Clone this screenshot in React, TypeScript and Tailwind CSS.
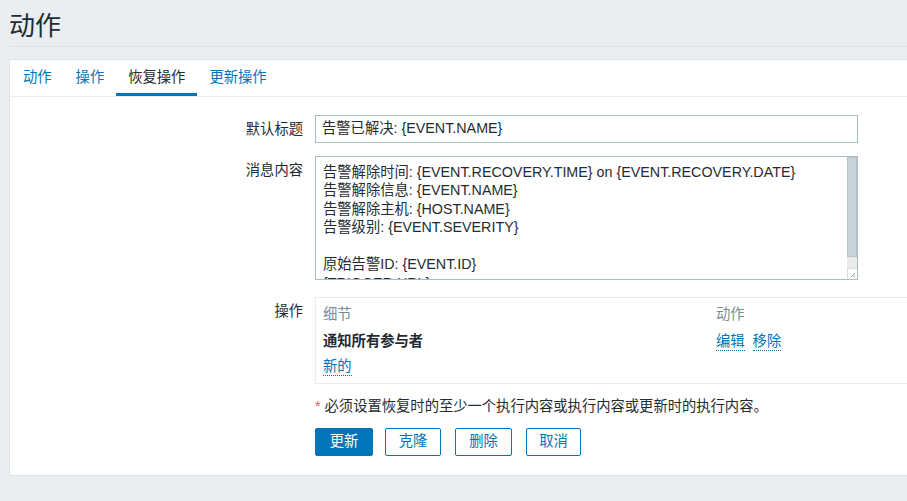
import React from "react";

const font = { fontFamily: '"Liberation Sans", "Noto Sans CJK SC", Arial, sans-serif' };

const message = [
  "告警解除时间: {EVENT.RECOVERY.TIME} on {EVENT.RECOVERY.DATE}",
  "告警解除信息: {EVENT.NAME}",
  "告警解除主机: {HOST.NAME}",
  "告警级别: {EVENT.SEVERITY}",
  "",
  "原始告警ID: {EVENT.ID}",
  "{TRIGGER.URL}",
].join("\n");

const Link: React.FC<{ children: React.ReactNode }> = ({ children }) => (
  <span className="text-[#0275b8] border-b border-dotted border-[#0275b8] leading-[17px] cursor-pointer">
    {children}
  </span>
);

export default function App() {
  const tabs = ["动作", "操作", "恢复操作", "更新操作"];
  const active = 2;

  return (
    <div
      className="min-h-screen bg-[#ebeef0] overflow-hidden text-[14.3px] text-[#1f2c33]"
      style={font}
    >
      {/* page title */}
      <div className="ml-[9px] h-[47px] border-b border-[#dfe4e7] flex items-center pt-[5px]">
        <h1 className="text-[26px] leading-[32px] font-normal">动作</h1>
      </div>

      {/* card */}
      <div className="ml-[9px] mr-[-40px] mt-[12px] bg-white border border-[#dfe4e7] pb-[19px]">
        <div className="flex h-[37px] border-b border-[#ebeef0] pl-px">
          {tabs.map((t, i) => (
            <div
              key={t}
              className={`px-3 h-[36px] pt-[3px] flex items-center border-b-[3px] cursor-pointer ${
                i === active
                  ? "border-[#0275b8] text-[#1f2c33]"
                  : "border-transparent text-[#0275b8]"
              }`}
            >
              {t}
            </div>
          ))}
        </div>

        <div className="pt-[18px] grid grid-cols-[293px_1fr] gap-x-3">
          {/* 默认标题 */}
          <div className="text-right leading-[28px]">默认标题</div>
          <div className="mb-[13px]">
            <div className="w-[543px] h-[28px] border border-[#acbbc2] px-[6px] flex items-center">
              告警已解决: {"{EVENT.NAME}"}
            </div>
          </div>

          {/* 消息内容 */}
          <div className="text-right leading-[28px]">消息内容</div>
          <div className="mb-[17px]">
            <div className="relative w-[543px] h-[124px] border border-[#acbbc2] overflow-hidden">
              <div className="whitespace-pre pl-[7px] pt-[5.5px] leading-[18.5px]">{message}</div>
              <div className="absolute right-0 top-0 bottom-0 w-[10px] bg-[#ebebeb] flex flex-col">
                <div className="h-[100px] bg-[#c9d4da] border border-[#b7c4cb]" />
                <div className="flex-1" />
                <div className="h-[11px] bg-white border-l border-t border-[#dcdcdc] flex items-end justify-end">
                  <svg width="6" height="6" viewBox="0 0 6 6" className="mr-px mb-px">
                    <path d="M5 1L1 5M5 3.5L3.5 5" stroke="#777" strokeWidth="0.8" />
                  </svg>
                </div>
              </div>
            </div>
          </div>

          {/* 操作 */}
          <div className="text-right leading-[28px]">操作</div>
          <div>
            <div className="w-[640px] border border-[#e8ebed] px-[7px] pt-[6px] pb-[6px]">
              <div className="grid grid-cols-[393px_1fr] h-[20px] items-center text-[#768d99]">
                <div>细节</div>
                <div>动作</div>
              </div>
              <div className="grid grid-cols-[393px_1fr] h-[20px] items-center mt-[7px]">
                <div className="font-bold">通知所有参与者</div>
                <div className="flex gap-2">
                  <Link>编辑</Link>
                  <Link>移除</Link>
                </div>
              </div>
              <div className="h-[20px] mt-[6px] flex items-center">
                <Link>新的</Link>
              </div>
            </div>
          </div>

          {/* note + buttons */}
          <div />
          <div>
            <div className="mt-[12px] leading-[20px]">
              <span className="text-[#e45959]">*</span> 必须设置恢复时的至少一个执行内容或执行内容或更新时的执行内容。
            </div>
            <div className="mt-[12px] flex">
              <button className="w-[58px] h-[28px] rounded-[2px] bg-[#0275b8] text-white border border-[#0275b8]">
                更新
              </button>
              <button className="ml-[12px] w-[56px] h-[28px] rounded-[2px] bg-white text-[#0275b8] border border-[#0275b8]">
                克隆
              </button>
              <button className="ml-[14px] w-[57px] h-[28px] rounded-[2px] bg-white text-[#0275b8] border border-[#0275b8]">
                删除
              </button>
              <button className="ml-[14px] w-[55px] h-[28px] rounded-[2px] bg-white text-[#0275b8] border border-[#0275b8]">
                取消
              </button>
            </div>
          </div>
        </div>
      </div>
    </div>
  );
}
